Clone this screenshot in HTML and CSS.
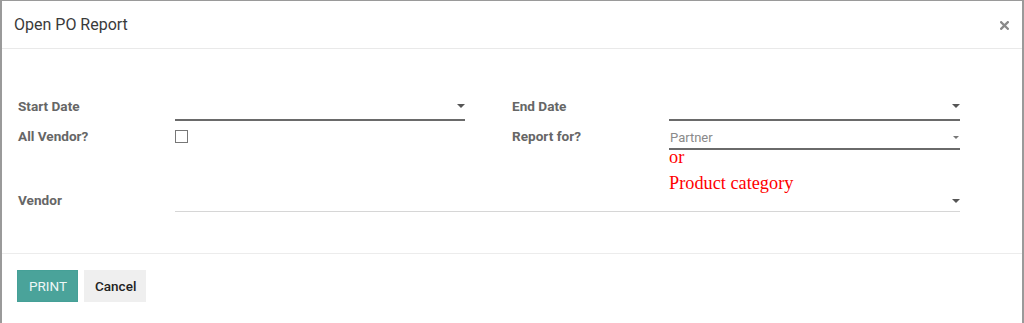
FILE: index.html
```html
<!DOCTYPE html>
<html>
<head>
<meta charset="utf-8">
<link rel="stylesheet" href="styles.css">
</head>
<body>
<div class="modal">
  <div class="header">
    <div class="title">Open PO Report</div>
    <div class="close">
      <svg width="9" height="9" viewBox="0 0 9 9"><path d="M1.2 1.2 L7.8 7.8 M7.8 1.2 L1.2 7.8" stroke="#8a8a8a" stroke-width="2.3" stroke-linecap="square"/></svg>
    </div>
  </div>
  <div class="body">
    <div class="grid">
      <div class="label r1">Start Date</div>
      <div class="field r1 dark"><span class="caret"></span></div>
      <div class="spacer"></div>
      <div class="label r1">End Date</div>
      <div class="field r1 dark"><span class="caret"></span></div>

      <div class="label r2">All Vendor?</div>
      <div class="chkcell"><span class="checkbox"></span></div>
      <div class="spacer"></div>
      <div class="label r2">Report for?</div>
      <div class="stack">
        <div class="field r2 dark"><span class="val">Partner</span><span class="caret small"></span></div>
        <div class="note or">or</div>
        <div class="note pc">Product category</div>
      </div>

      <div class="label r3">Vendor</div>
      <div class="field r3 light wide"><span class="caret"></span></div>
    </div>
  </div>
  <div class="footer">
    <button class="btn primary">PRINT</button>
    <button class="btn secondary">Cancel</button>
  </div>
</div>
</body>
</html>
```

FILE: styles.css
```css
html, body {
  margin: 0;
  padding: 0;
  height: 100%;
  background: #9a9a9a;
  font-family: Roboto, "Liberation Sans", sans-serif;
}
.modal {
  margin: 1px 2px 0 2px;
  background: #fff;
  height: 322px;
  overflow: hidden;
}
.header {
  height: 48px;
  border-bottom: 1px solid #e9e9e9;
  display: flex;
  align-items: center;
  justify-content: space-between;
  padding: 0 13px 0 12px;
  box-sizing: border-box;
}
.title {
  font-size: 16px;
  color: #3a3a3a;
  padding-top: 0;
}
.close {
  display: flex;
  align-items: center;
  padding-top: 1px;
}
.body {
  height: 205px;
  border-bottom: 1px solid #ececec;
  box-sizing: border-box;
  padding: 47px 0 0 16px;
}
.grid {
  display: grid;
  grid-template-columns: 157px 290px 47px 157px 291px;
  align-items: start;
}
.label {
  font-size: 13.6px;
  font-weight: bold;
  color: #666;
  line-height: 20px;
}
.label.r1 { padding-top: 0; }
.label.r2 { padding-top: 5px; }
.label.r3 { margin-top: -2px; }
.field {
  position: relative;
  box-sizing: border-box;
}
.field.dark {
  border-bottom: 2px solid #6a6a6a;
}
.field.r1 { height: 26px; margin-top: -1px; }
.field.r2 { height: 25px; margin-top: 4px; }
.field.r3 { height: 22px; margin-top: -2px; }
.field.light { border-bottom: 1px solid #d6d6d6; }
.field.wide { grid-column: 2 / 6; }
.caret {
  position: absolute;
  right: 0;
  top: 9px;
  width: 0;
  height: 0;
  border-left: 4px solid transparent;
  border-right: 4px solid transparent;
  border-top: 4px solid #555;
}
.caret.small {
  top: 11px;
  border-left-width: 3px;
  border-right-width: 3px;
  border-top-width: 3px;
  right: 1px;
  border-top-color: #777;
}
.field.r3 .caret { top: 9px; }
.val {
  display: block;
  font-size: 13px;
  color: #8a8a8a;
  line-height: 20px;
  padding: 3px 0 0 1px;
}
.chkcell { padding-top: 9px; }
.checkbox {
  display: block;
  width: 11px;
  height: 11px;
  border: 1px solid #777;
  background: #fff;
}
.note {
  font-family: "Liberation Serif", serif;
  font-size: 18.3px;
  color: #ff0000;
  line-height: 18px;
}
.or { margin-top: -2px; }
.pc { margin-top: 8px; }
.footer {
  padding: 16px 15px;
  display: flex;
  gap: 6px;
}
.btn {
  height: 32px;
  border: none;
  font-family: Roboto, "Liberation Sans", sans-serif;
  font-size: 13.5px;
  padding: 0 11px;
  border-radius: 0;
  box-sizing: border-box;
}
.primary {
  background: #4aa39a;
  color: #eef7f6;
  width: 61px;
  border: 1px solid #45a097;
}
.secondary {
  background: #efefef;
  color: #222;
  font-weight: 500;
  width: 62px;
}
```
